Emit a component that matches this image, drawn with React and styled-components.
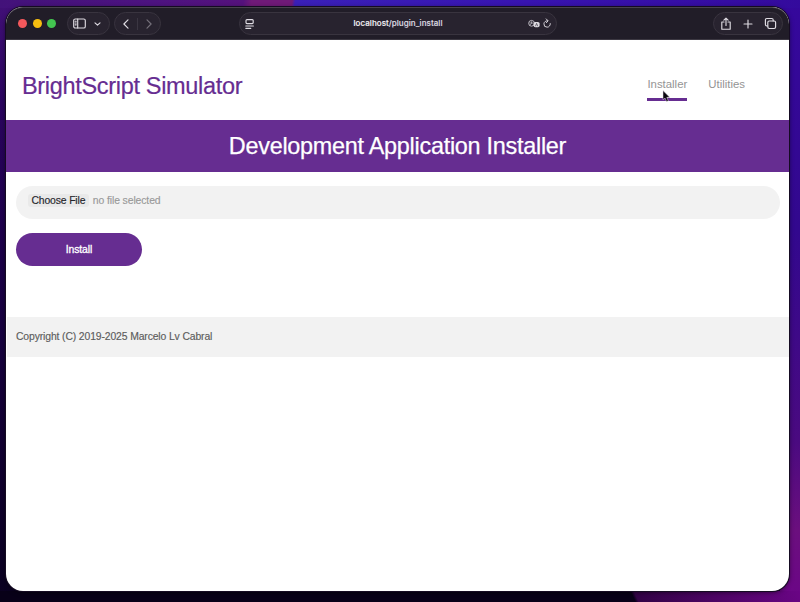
import React from "react";
import styled, { createGlobalStyle } from "styled-components";

const Global = createGlobalStyle`
  *{box-sizing:border-box}
  body{margin:0;font-family:"Liberation Sans",Arial,sans-serif;overflow:hidden}
`;

const Desktop = styled.div`
  width:800px;height:602px;padding:7px 11px 11px 6px;
  background:
    linear-gradient(65deg,#080018 0 576px,#330347 579px,#6a0585 730px) 0 591px/800px 11px no-repeat,
    linear-gradient(100deg,#43127a 0,#4d1380 150px,#55127c 240px,#701a78 248px,#701a78 288px,#3a20b8 291px,#3814b0 520px,#340a9c 800px) 0 0/800px 8px no-repeat,
    linear-gradient(#35089c 0,#32088e 230px,#4a0a80 440px,#6b0f7e 530px,#6b0587 602px) 780px 0/20px 602px no-repeat,
    linear-gradient(#421078 0,#2b0560 100px,#1b0048 260px,#0a0020 602px);
`;
const Window = styled.div`
  height:584px;display:flex;flex-direction:column;overflow:hidden;background:#fff;
  border-radius:17px;box-shadow:0 0 0 1px #150b22,0 1px 5px #0009;
`;
const Toolbar = styled.header`
  height:33px;flex:none;display:grid;grid-template-columns:233px 318px 1fr auto;align-items:center;
  background:#211d28;border-top:1px solid #47424c;border-bottom:1px solid #3c3842;
  padding:0 6px 0 0;color:#dedbe2;border-radius:17px 17px 0 0;
`;
const Controls = styled.div`display:flex;align-items:center;padding-left:12px;`;
const Lights = styled.div`display:flex;gap:5.5px;margin-right:11px;`;
const Light = styled.span`width:9px;height:9px;border-radius:50%;background:${p => p.$color};`;
const Pill = styled.div`
  width:${p => p.$w}px;height:23px;border:1px solid #39343f;border-radius:12px;background:#28232f;
  display:flex;align-items:center;justify-content:space-between;padding:${p => p.$pad || "0 6px"};
  margin-right:${p => p.$gap || 0}px;
`;
const Divider = styled.span`width:1px;height:12px;background:#3b3642;`;
const Icon = styled.svg`
  display:block;width:${p => p.$w || 14}px;height:${p => p.$h || 14}px;fill:none;stroke:currentColor;
  stroke-width:1.15;stroke-linecap:round;stroke-linejoin:round;opacity:${p => p.$dim ? .42 : 1};
`;
const Address = styled(Pill)`
  display:grid;grid-template-columns:14px 1fr 13px 12px;gap:1px;padding:0 2px 0 3px;
`;
const Url = styled.span`
  font:500 8px/12px Inter,sans-serif;text-align:center;color:#f2f0f4;padding:0 0 1px 11px;letter-spacing:.05px;
  -webkit-text-stroke:.15px currentColor;
  span{color:#dedbe2}
`;
const Header = styled.div`
  height:80px;flex:none;display:flex;justify-content:space-between;padding:0 44px 0 16px;background:#fff;
`;
const Brand = styled.h1`
  margin:32px 0 0;font-size:23.5px;line-height:28px;font-weight:400;color:#662d91;letter-spacing:-.32px;white-space:nowrap;
  -webkit-text-stroke:.2px currentColor;
`;
const Nav = styled.nav`display:flex;gap:21px;padding-top:37px;`;
const NavItem = styled.a`
  height:24px;font-size:11.4px;line-height:15px;color:#949494;border-bottom:3px solid ${p => p.$active ? "#662d91" : "transparent"};
  position:relative;white-space:nowrap;
`;
const Cursor = styled.svg`position:absolute;left:15px;top:13px;width:8px;height:13px;`;
const Banner = styled.h2`
  height:52px;flex:none;margin:0;background:#662d91;color:#fff;text-align:center;
  font-size:23.4px;line-height:52px;font-weight:400;letter-spacing:-.26px;
  -webkit-text-stroke:.25px currentColor;
`;
const Form = styled.form`height:145px;flex:none;padding:14px 9px 0 10px;`;
const FileField = styled.div`
  height:33px;border-radius:17px;background:#f2f2f2;display:flex;align-items:flex-start;padding:8px 12px;
  font-size:10.4px;line-height:13px;letter-spacing:-.1px;color:#999;
  -webkit-text-stroke:.15px currentColor;
`;
const Choose = styled.span`
  background:#e9e9e9;border-radius:3px;color:#25252b;padding:0 4px 0 3.5px;margin-right:3.5px;letter-spacing:-.15px;
`;
const Install = styled.button`
  display:block;width:126px;height:33px;margin-top:14px;border:0;border-radius:17px;background:#662d91;color:#fff;
  font:10.4px/33px "Liberation Sans",sans-serif;letter-spacing:-.1px;padding:0;-webkit-text-stroke:.3px #fff;
`;
const Footer = styled.footer`
  height:40px;flex:none;background:#f2f2f2;margin-left:1px;padding-left:9px;color:#5c5c5c;font-size:10.4px;line-height:40px;
  letter-spacing:-.13px;-webkit-text-stroke:.15px currentColor;
`;

export default function App() {
  return (
    <>
      <Global />
      <Desktop>
        <Window>
          <Toolbar>
            <Controls>
              <Lights>
                <Light $color="#f4585c" /><Light $color="#f6bd10" /><Light $color="#43c550" />
              </Lights>
              <Pill $w={43} $gap={4} $pad="0 8px 0 5px">
                <Icon $w={13} $h={11} viewBox="0 0 13 11"><rect x=".7" y="1" width="11.6" height="9" rx="1.6" /><path d="M4.7 1v9M2.2 3.2h1M2.2 5h1M2.2 6.8h1" /></Icon>
                <Icon $w={7} $h={6} viewBox="0 0 7 6"><path d="m1 1.8 2.5 2.4L6 1.8" /></Icon>
              </Pill>
              <Pill $w={47} $pad="0 8px 0 8px">
                <Icon $w={6} $h={10} viewBox="0 0 6 10"><path d="M5 .8.9 5 5 9.2" /></Icon>
                <Divider />
                <Icon $w={6} $h={10} $dim viewBox="0 0 6 10"><path d="M1 .8 5.1 5 1 9.2" /></Icon>
              </Pill>
            </Controls>
            <Address $w={318}>
              <Icon $w={14} $h={12} viewBox="0 0 14 12"><rect x="3" y="1.6" width="7.2" height="4" rx="1" /><path d="M2.8 8h7.6M2.8 10.3h5" /></Icon>
              <Url>localhost<span>/plugin_install</span></Url>
              <Icon $w={12} $h={10} viewBox="0 0 12 10">
                <circle cx="3.6" cy="4.3" r="2.9" strokeWidth=".8" /><path d="M2 4h3M3.5 2.7V4c0 1-.8 1.5-1.4 1.7" strokeWidth=".6" />
                <rect x="5.6" y="2.9" width="6" height="5.4" rx="1.7" fill="currentColor" stroke="none" /><path d="m7.6 6.9 1-2.5 1 2.5" stroke="#28232f" strokeWidth=".6" />
              </Icon>
              <Icon $w={10} $h={11} viewBox="0 0 10 11"><path d="M8.3 5.6A3.2 3.2 0 1 1 5.6 2.8M4.2.9 6.1 2.8 4.4 4.7" strokeWidth=".95" /></Icon>
            </Address>
            <span />
            <Pill $w={70} $pad="0 5px 0 6px">
              <Icon $w={12} $h={14} viewBox="0 0 12 14"><path d="M4 5H1.8v7.2h8.4V5H8M6 8.5V1.2M3.9 3.2 6 1.2l2.1 2" /></Icon>
              <Icon $w={10} $h={10} viewBox="0 0 10 10"><path d="M5 1v8M1 5h8" /></Icon>
              <Icon $w={13} $h={13} viewBox="0 0 13 13"><rect x="3.8" y="4" width="7.8" height="7.5" rx="1.4" /><path d="M3.7 9H2.8Q1.4 9 1.4 7.6V3Q1.4 1.5 2.8 1.5h5Q9.2 1.5 9.2 2.9V4" /></Icon>
            </Pill>
          </Toolbar>
          <Header>
            <Brand>BrightScript Simulator</Brand>
            <Nav>
              <NavItem $active>Installer
                <Cursor viewBox="0 0 8 13"><path d="M1 .6v9.2l2-1.8 1.6 3.6 1.8-.8L4.8 7.4l2.9-.2z" fill="#0b0810" stroke="#e4dfe8" strokeWidth=".5" /></Cursor>
              </NavItem>
              <NavItem>Utilities</NavItem>
            </Nav>
          </Header>
          <Banner>Development Application Installer</Banner>
          <Form>
            <FileField><Choose>Choose File</Choose>no file selected</FileField>
            <Install type="button">Install</Install>
          </Form>
          <Footer>Copyright (C) 2019-2025 Marcelo Lv Cabral</Footer>
        </Window>
      </Desktop>
    </>
  );
}
